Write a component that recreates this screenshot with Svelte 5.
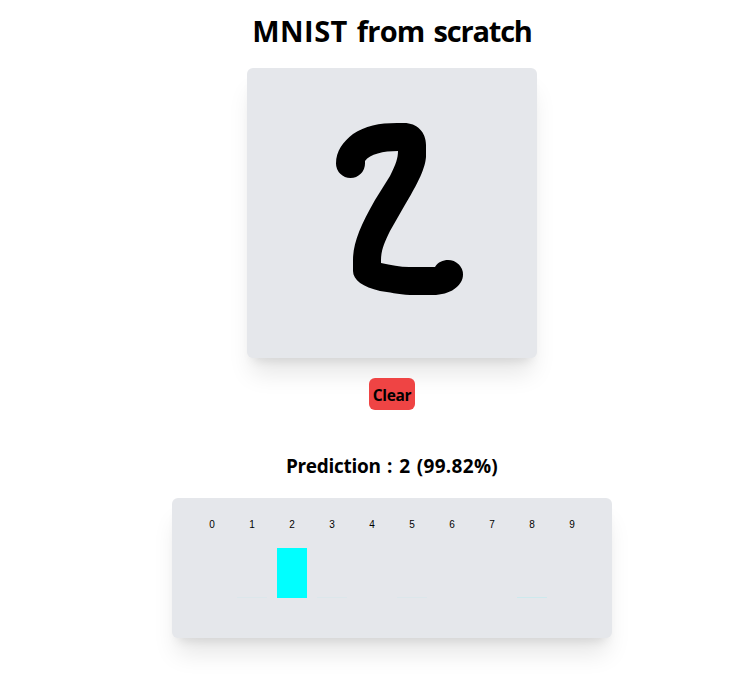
<script>
  const values = [0, 0.04, 1, 0.04, 0, 0.04, 0, 0, 0.1, 0];
</script>

<main>
  <h1><span class="caps">MNIST</span> <span class="from">from</span> <span class="scratch">scratch</span></h1>
  <svg class="pad" viewBox="247 68 290 290">
    <path d="M336 163.500C336 151 343 142 353 134C365 126 379 123 397 123H404C417 123 426 132 426 145V157C425 168 420 180 402 210L390 231C384 243 381 251 381 260V263C391 265 400 267 409 267H435C438 262 443 260 448 260A15 14.500 0 0 1 463 274.500C463 286 450 295 433 295H410C398 294.500 389 292 380 291C363 287 353 280 353 271V260C353 244 360 226 375 200L390 176C396 164 398 158 398 151C383 151 370 154 365 161V163.500A14.500 14.500 0 0 1 336 163.500Z" />
  </svg>
  <button><span>Clear</span></button>
  <h2><span class="label">Prediction</span> : 2 <span>(99.82%)</span></h2>
  <div class="chart">
    {#each values as value, digit}
      <div class="column">
        <span class="digit">{digit}</span>
        <div class="track">
          {#if value === 1}
            <div class="bar"></div>
          {:else if value}
            <div class="bar trace" style="opacity: {value}"></div>
          {/if}
        </div>
      </div>
    {/each}
  </div>
</main>

<style>
  :global(body) { background: #fff; overflow: hidden; }
  main {
    box-sizing: border-box;
    height: 693px;
    padding-left: 28px;
    display: flex;
    flex-direction: column;
    align-items: center;
    font-family: "Open Sans", "Noto Sans", sans-serif;
    color: #000;
  }
  h1, h2 { margin: 0; font-weight: 700; white-space: nowrap; }
  h1 { height: 36px; margin-top: 12px; font-size: 29px; line-height: 37px; word-spacing: 1.5px; }
  .caps { letter-spacing: 0.45px; }
  .from { letter-spacing: -0.8px; }
  .scratch { letter-spacing: -1.2px; }
  .pad {
    display: block;
    flex: none;
    width: 290px;
    height: 290px;
    margin-top: 20px;
    background: #e5e7eb;
    border-radius: 6px;
  }
  .pad, .chart { box-shadow: 0 20px 25px -5px rgb(0 0 0 / .1), 0 8px 10px -6px rgb(0 0 0 / .1); }
  button {
    width: 46px;
    height: 32px;
    margin-top: 20px;
    padding: 2px 0 0;
    border: 0;
    border-radius: 6px;
    background: #ef4444;
    color: #000;
    font: 700 15.5px/24px "Open Sans", "Noto Sans", sans-serif;
    letter-spacing: -0.35px;
    display: flex;
    justify-content: center;
    align-items: center;
  }
  h2 { margin-top: 42px; height: 28px; font-size: 19px; line-height: 28px; letter-spacing: 0.3px; word-spacing: 1.2px; }
  .label { letter-spacing: -0.3px; }
  .chart {
    box-sizing: border-box;
    display: flex;
    flex: none;
    width: 440px;
    height: 140px;
    margin-top: 18px;
    padding: 20px;
    border-radius: 6px;
    background: #e5e7eb;
  }
  .column { width: 40px; display: flex; flex-direction: column; align-items: center; }
  .digit { height: 30px; font: 10px/14px "Liberation Sans", Arial, sans-serif; }
  .track { width: 30px; height: 50px; display: flex; align-items: flex-end; }
  .bar { width: 100%; height: 100%; background: #0ff; }
  .trace { height: 1px; }
</style>
